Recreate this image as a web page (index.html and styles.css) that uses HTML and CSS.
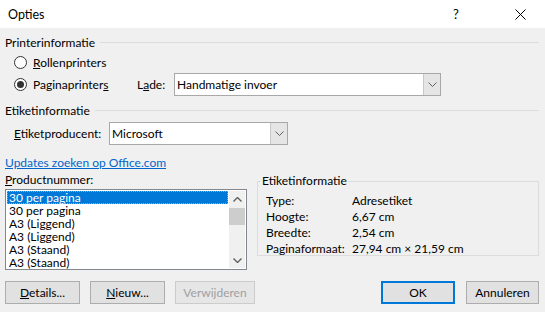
FILE: index.html
```html
<!DOCTYPE html>
<html lang="nl">
<head>
  <meta charset="UTF-8">
  <title>Opties</title>
  <link rel="stylesheet" href="styles.css">
</head>
<body>
  <div class="titlebar">
    <span class="title">Opties</span>
    <span class="help">?</span>
    <span class="close">
      <svg width="11" height="11" viewBox="0 0 11 11"><path d="M0.5 0.5 L10.5 10.5 M10.5 0.5 L0.5 10.5" stroke="#000" stroke-width="1" fill="none"/></svg>
    </span>
  </div>

  <div class="dialog">
    <div class="section-head"><span>Printerinformatie</span><span class="rule"></span></div>

    <div class="radio-row">
      <span class="radio"></span>
      <span><u>R</u>ollenprinters</span>
    </div>
    <div class="radio-row">
      <span class="radio checked"></span>
      <span class="pagina">Paginaprinter<u>s</u></span>
      <span class="lade-label">L<u>a</u>de:</span>
      <div class="combo lade">
        <span class="combo-text">Handmatige invoer</span>
        <span class="combo-btn"><svg width="9" height="5" viewBox="0 0 9 5"><path d="M0.5 0.5 L4.5 4.5 L8.5 0.5" stroke="#606060" fill="none"/></svg></span>
      </div>
    </div>

    <div class="section-head second"><span>Etiketinformatie</span><span class="rule"></span></div>

    <div class="producent-row">
      <span class="producent-label"><u>E</u>tiketproducent:</span>
      <div class="combo producent">
        <span class="combo-text">Microsoft</span>
        <span class="combo-btn"><svg width="9" height="5" viewBox="0 0 9 5"><path d="M0.5 0.5 L4.5 4.5 L8.5 0.5" stroke="#606060" fill="none"/></svg></span>
      </div>
    </div>

    <a class="link" href="#">Updates zoeken op Office.com</a>

    <div class="lower">
      <div class="product-col">
        <div class="product-label"><u>P</u>roductnummer:</div>
        <div class="listbox">
          <div class="items">
            <div class="item selected">30 per pagina</div>
            <div class="item">30 per pagina</div>
            <div class="item">A3 (Liggend)</div>
            <div class="item">A3 (Liggend)</div>
            <div class="item">A3 (Staand)</div>
            <div class="item">A3 (Staand)</div>
          </div>
          <div class="scrollbar">
            <span class="arrow"><svg width="9" height="5" viewBox="0 0 9 5"><path d="M0.5 4.5 L4.5 0.5 L8.5 4.5" stroke="#606060" stroke-width="1.4" fill="none"/></svg></span>
            <span class="track"><span class="thumb"></span></span>
            <span class="arrow"><svg width="9" height="5" viewBox="0 0 9 5"><path d="M0.5 0.5 L4.5 4.5 L8.5 0.5" stroke="#606060" stroke-width="1.4" fill="none"/></svg></span>
          </div>
        </div>
      </div>

      <fieldset class="info">
        <legend>Etiketinformatie</legend>
        <div class="info-grid">
          <span>Type:</span><span>Adresetiket</span>
          <span>Hoogte:</span><span>6,67 cm</span>
          <span>Breedte:</span><span>2,54 cm</span>
          <span>Paginaformaat:</span><span>27,94 cm × 21,59 cm</span>
        </div>
      </fieldset>
    </div>

    <div class="buttons">
      <button class="btn"><u>D</u>etails...</button>
      <button class="btn"><u>N</u>ieuw...</button>
      <button class="btn wide" disabled>Verwijderen</button>
      <span class="spacer"></span>
      <button class="btn default">OK</button>
      <button class="btn cancel">Annuleren</button>
    </div>
  </div>
</body>
</html>
```

FILE: styles.css
```css
body { margin: 0; width: 545px; height: 312px; overflow: hidden; background: #f0f0f0; font-family: Lato, "Noto Sans", sans-serif; font-size: 12px; color: #000; }
u { text-decoration: underline; text-underline-offset: 1px; }

.titlebar { height: 28px; background: #fff; display: flex; align-items: center; padding: 0 0 0 8px; }
.title { flex: 1; font-size: 12.5px; }
.help { width: 14px; margin-right: 48px; font-size: 13px; }
.close { width: 11px; margin-right: 19px; display: flex; }

.dialog { padding: 0 6px 0 5px; }
.section-head { display: flex; align-items: center; gap: 5px; height: 14px; margin-top: 7px; }
.section-head.second { margin-top: 8px; }
.rule { flex: 1; border-top: 1px solid #dcdcdc; }

.radio-row { display: flex; align-items: center; height: 22px; padding-left: 9px; margin-top: 2px; }
.radio-row + .radio-row { margin-top: 0; }
.radio { width: 11px; height: 11px; border: 1px solid #333; border-radius: 50%; background: #fff; margin-right: 6px; display: flex; align-items: center; justify-content: center; }
.radio.checked::after { content: ""; width: 7px; height: 7px; border-radius: 50%; background: #333; }
.pagina { width: 104px; }
.lade-label { width: 37px; }

.combo { display: flex; height: 21px; border: 1px solid #a8a8a8; background: #fff; }
.combo-text { flex: 1; padding-left: 2px; line-height: 21px; }
.combo-btn { width: 16px; background: #e5e5e5; border-left: 1px solid #c8c8c8; display: flex; align-items: center; justify-content: center; }
.lade { width: 265px; }
.producent { width: 177px; }

.producent-row { display: flex; align-items: center; height: 23px; margin-top: 5px; padding-left: 9px; }
.producent-label { width: 95px; }

.link { display: block; color: #0066cc; height: 14px; line-height: 14px; margin-top: 11px; width: max-content; }

.lower { display: flex; gap: 10px; margin-top: 3px; }
.product-col { width: 242px; }
.product-label { height: 14px; line-height: 14px; margin-bottom: 2px; }
.listbox { display: flex; height: 79px; border: 1px solid #828790; background: #fff; }
.items { flex: 1; padding: 1px 1px 0 1px; }
.item { height: 13px; line-height: 13px; padding-left: 2px; white-space: nowrap; }
.item.selected { background: #0078d7; color: #fff; outline: 1px dotted #f39c32; outline-offset: -1px; }
.scrollbar { width: 16px; margin: 1px 1px 1px 0; background: #f0f0f0; display: flex; flex-direction: column; }
.arrow { height: 16px; display: flex; align-items: center; justify-content: center; }
.track { flex: 1; }
.thumb { display: block; height: 17px; background: #cdcdcd; margin-top: 1px; }

.info { flex: 1; margin: 1px 0 0 0; padding: 4px 8px 0 8px; height: 82px; border: 1px solid #dcdcdc; box-sizing: border-box; }
.info legend { padding: 0 1px; margin-left: -5px; line-height: 14px; }
.info-grid { display: grid; grid-template-columns: 86px auto; grid-auto-rows: 16px; align-items: center; }

.buttons { display: flex; gap: 10px; margin-top: 11px; }
.spacer { flex: 1; }
.btn { width: 75px; height: 23px; padding: 0; font: inherit; color: #000; background: #e1e1e1; border: 1px solid #adadad; }
.btn.wide { width: 80px; }
.btn.cancel { width: 73px; margin-left: 1px; }
.btn:disabled { color: #a0a0a0; border-color: #cccccc; background: #e6e6e6; }
.btn.default { width: 74px; border: 2px solid #0078d7; }
```
